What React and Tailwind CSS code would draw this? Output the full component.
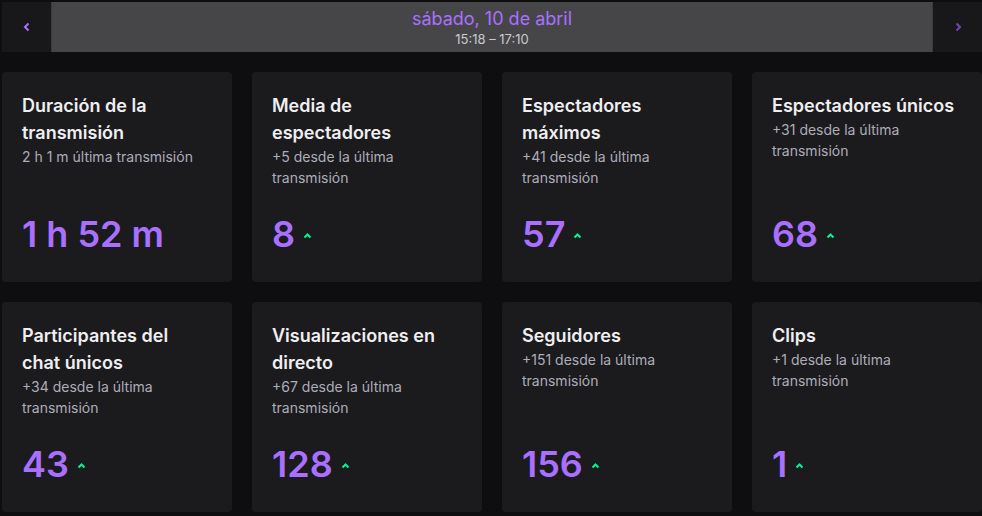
import React from 'react';

const stats = [
    { title: 'Duración de la transmisión', sub: '2 h 1 m última transmisión', value: '1 h 52 m', up: false },
    { title: 'Media de espectadores', sub: '+5 desde la última transmisión', value: '8', up: true },
    { title: 'Espectadores máximos', sub: '+41 desde la última transmisión', value: '57', up: true },
    { title: 'Espectadores únicos', sub: '+31 desde la última transmisión', value: '68', up: true },
    { title: 'Participantes del chat únicos', sub: '+34 desde la última transmisión', value: '43', up: true },
    { title: 'Visualizaciones en directo', sub: '+67 desde la última transmisión', value: '128', up: true },
    { title: 'Seguidores', sub: '+151 desde la última transmisión', value: '156', up: true },
    { title: 'Clips', sub: '+1 desde la última transmisión', value: '1', up: true },
];

const Chevron = ({ dir = 'left', className = '' }) => (
    <svg width="8" height="10" viewBox="0 0 8 10" className={className}>
        {dir === 'left' ? (
            <path d="M5.5 1.5L2 5l3.5 3.5" fill="none" stroke="currentColor" strokeWidth="2" />
        ) : (
            <path d="M2.5 1.5L6 5 2.5 8.5" fill="none" stroke="currentColor" strokeWidth="2" />
        )}
    </svg>
);

const UpCaret = () => (
    <svg width="9" height="6" viewBox="0 0 9 6" className="text-[#00f593] ml-[8px] mt-[4px]">
        <path d="M1.5 4.5l3-3 3 3" fill="none" stroke="currentColor" strokeWidth="2" />
    </svg>
);

const StatCard = ({ stat }) => (
    <div className="flex flex-col h-[210px] rounded-[4px] bg-[#1b1b1e] px-5 pt-5 pb-[26px]">
        <h3 className="text-[18px] leading-[27px] font-semibold text-[#efeff1] pr-2">{stat.title}</h3>
        <p className="text-[14px] leading-[21px] text-[#adadb8]">{stat.sub}</p>
        <div className="mt-auto flex items-center">
            <span className="text-[36px] leading-[44px] font-semibold text-[#a970ff]">{stat.value}</span>
            {stat.up && <UpCaret />}
        </div>
    </div>
);

export default function App() {
    return (
        <div className="w-[982px] h-[516px] overflow-hidden bg-[#0e0e10] pl-[2px] pt-[2px] font-['Inter',sans-serif]">
            {/* Date navigation bar */}
            <div className="flex h-[50px]">
                <button className="w-[50px] flex items-center justify-center bg-[#18181b] border-r border-[#3a3a3d] text-[#a970ff]">
                    <Chevron dir="left" />
                </button>
                <div className="flex-1 flex flex-col items-center justify-center bg-[#464649]">
                    <div className="text-[18px] leading-[22px] text-[#a970ff]">sábado, 10 de abril</div>
                    <div className="text-[13px] leading-[16px] text-[#c8c8d0] mt-[1px]">15:18 – 17:10</div>
                </div>
                <button className="w-[50px] flex items-center justify-center bg-[#18181b] border-l border-[#3a3a3d] text-[#6f46b5]">
                    <Chevron dir="right" />
                </button>
            </div>

            {/* Stats grid */}
            <div className="grid grid-cols-[repeat(4,230px)] gap-5 mt-5">
                {stats.map((s) => (
                    <StatCard key={s.title} stat={s} />
                ))}
            </div>
        </div>
    );
}
